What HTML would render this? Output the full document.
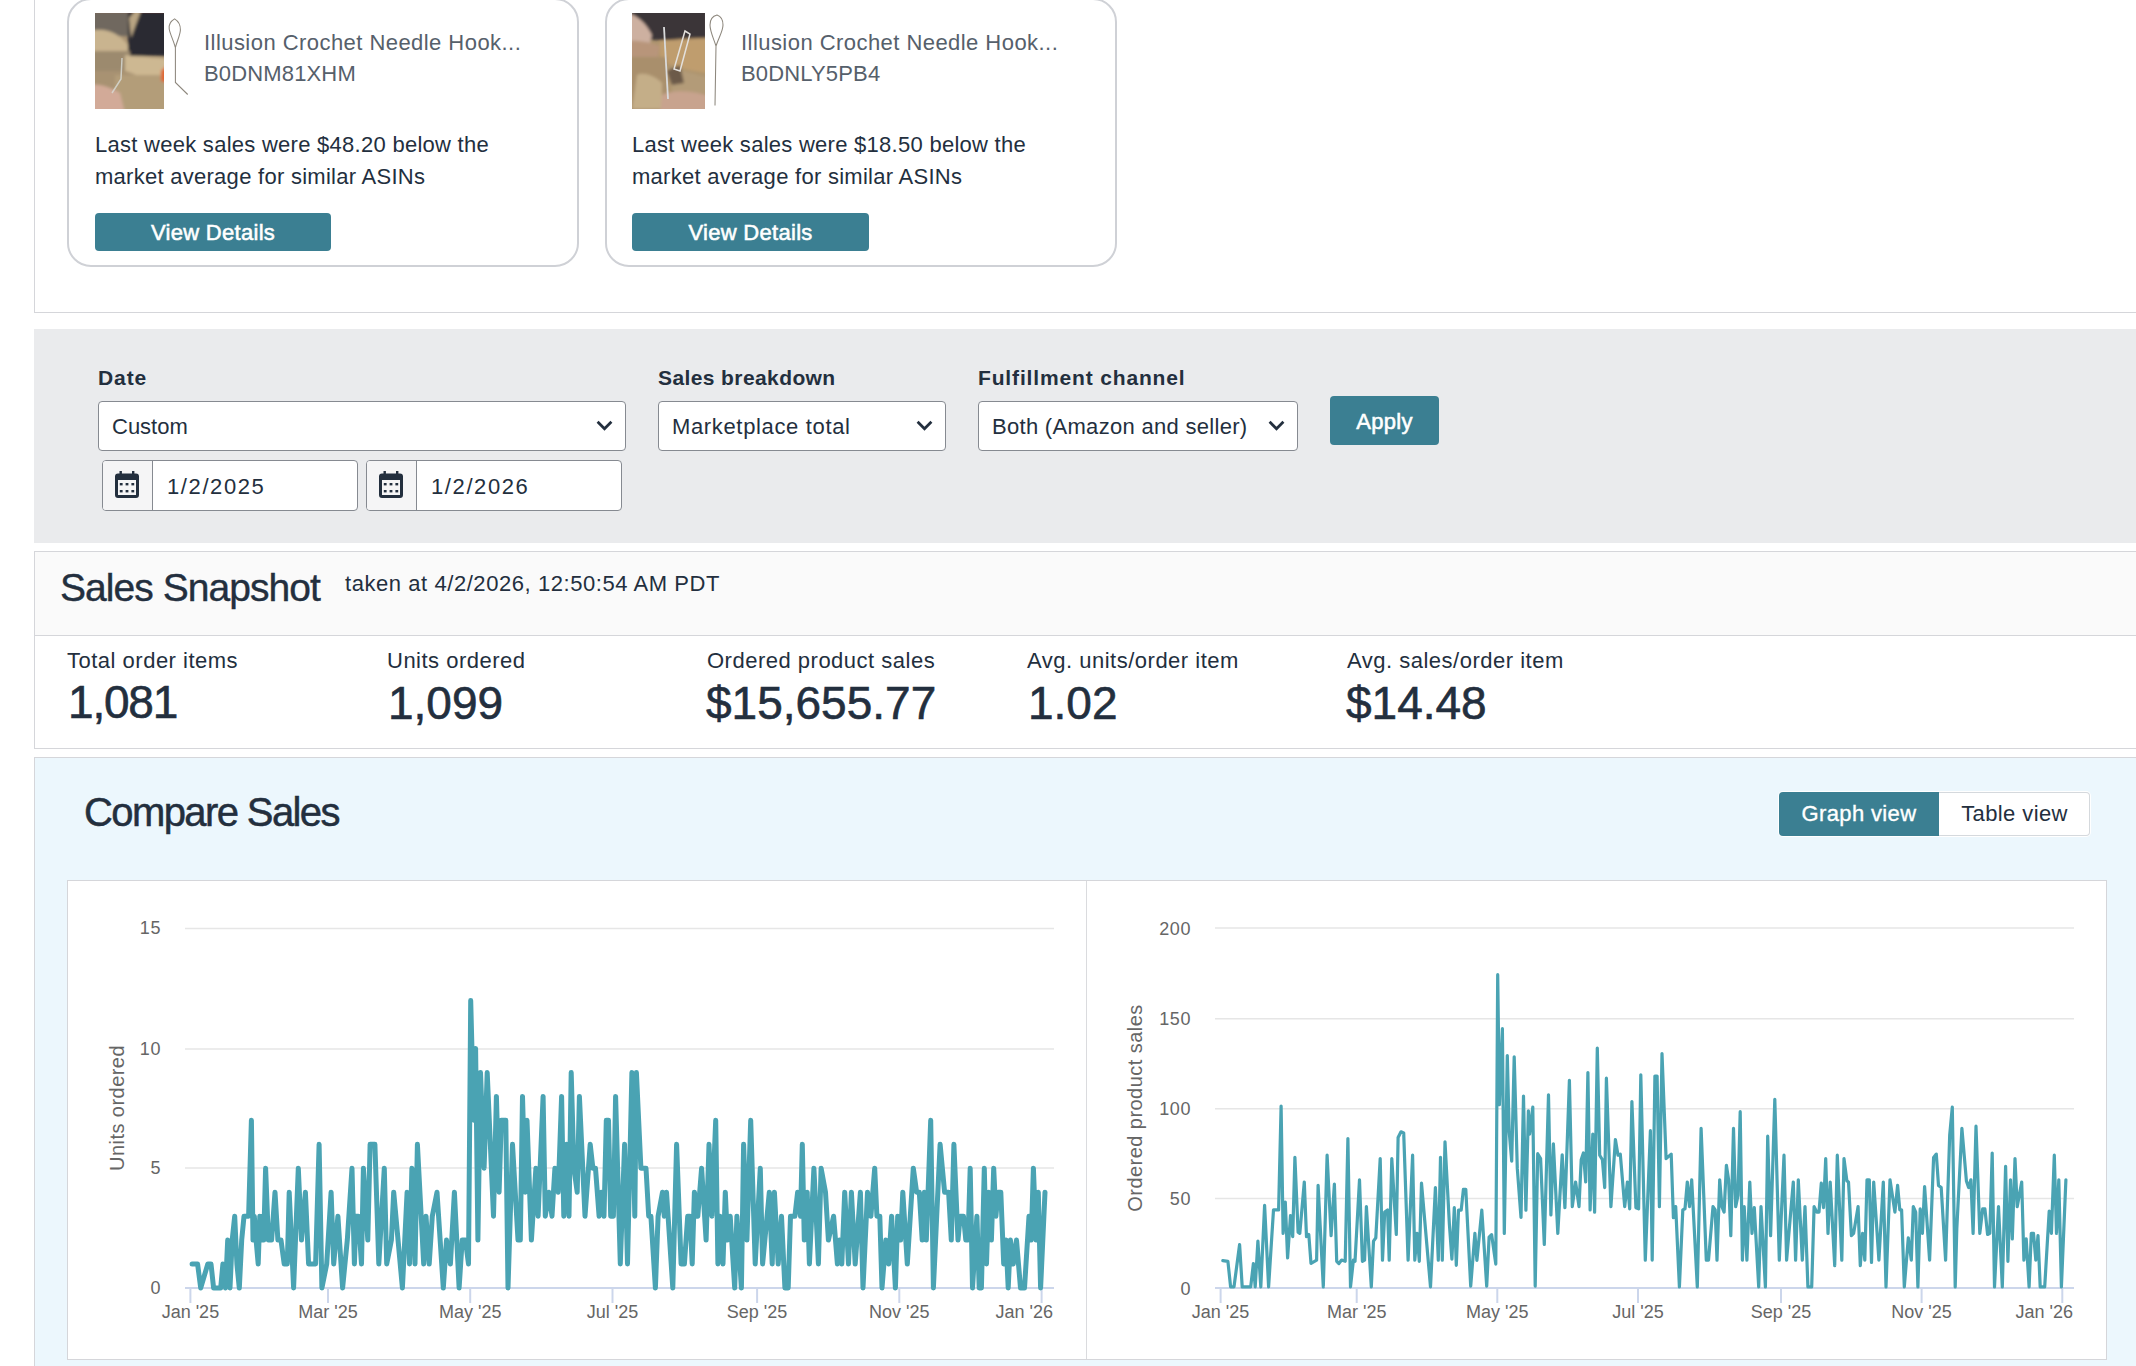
<!DOCTYPE html>
<html><head><meta charset="utf-8">
<style>
*{box-sizing:border-box;margin:0;padding:0}
html,body{width:2136px;height:1366px;overflow:hidden;background:#fff;font-family:"Liberation Sans",sans-serif;color:#232f3e}
.abs{position:absolute}
.panel{position:absolute;left:34px;top:-20px;width:2110px;height:333px;border-left:1px solid #d5d6da;border-bottom:1px solid #d5d6da;background:#fff}
.card{position:absolute;top:-2px;width:512px;height:269px;border:2px solid #cfd1d6;border-radius:24px;background:#fff}
.pimg1{background:linear-gradient(160deg,#6b6258 0%,#3a3530 30%,#b9a37f 45%,#8c7a60 70%,#c4ad8a 100%)}
.pimg2{background:linear-gradient(170deg,#3a3330 0%,#6d6055 18%,#b59f7c 35%,#a08a68 65%,#c7b291 100%)}
.ptitle{position:absolute;font-size:22px;color:#56606b;white-space:nowrap;letter-spacing:0.45px}
.ptext{position:absolute;font-size:22px;line-height:32px;color:#232f3e;white-space:nowrap;letter-spacing:0.27px}
.btn{position:absolute;background:#3b7f92;color:#fff;border-radius:4px;font-size:22px;font-weight:normal;-webkit-text-stroke:0.55px #fff;letter-spacing:0.3px;text-align:center;padding-top:1px}
.filters{position:absolute;left:34px;top:329px;width:2110px;height:214px;background:#eaebed}
.lbl{position:absolute;font-size:21px;font-weight:bold;color:#232f3e;white-space:nowrap;letter-spacing:0.5px}
.sel{position:absolute;height:50px;background:#fff;border:1.5px solid #868a91;border-radius:4px}
.sel span{position:absolute;left:13px;top:12px;font-size:22px;color:#232f3e;white-space:nowrap}
.chev{position:absolute;top:15px;width:17px;height:17px}
.din{position:absolute;height:51px;width:256px;background:#fff;border:1.5px solid #868a91;border-radius:4px;overflow:hidden}
.din .ic{position:absolute;left:0;top:0;width:50px;height:100%;background:#f5f5f6;border-right:1.5px solid #868a91}
.din span{position:absolute;left:64px;top:13px;font-size:22px;white-space:nowrap;letter-spacing:1.6px}
.snap{position:absolute;left:34px;top:551px;width:2110px;height:198px;border:1px solid #d5d6da;border-right:none;background:#fff}
.snaphead{position:absolute;left:0;top:0;width:100%;height:84px;background:#fafafa;border-bottom:1px solid #d5d6da}
.mlabel{position:absolute;font-size:22px;color:#232f3e;white-space:nowrap;letter-spacing:0.5px}
.mval{position:absolute;font-size:46px;color:#232f3e;white-space:nowrap;-webkit-text-stroke:0.6px #232f3e}
.compare{position:absolute;left:34px;top:757px;width:2110px;height:640px;background:#ecf7fd;border:1px solid #d5d6da;border-right:none}
.chartbox{position:absolute;left:67px;top:880px;width:2040px;height:480px;background:#fff;border:1.5px solid #d5d6da}
.axl{font-family:"Liberation Sans",sans-serif;font-size:18px;fill:#666666}
.ayl{font-family:"Liberation Sans",sans-serif;font-size:18px;fill:#666666;letter-spacing:0.6px}
.axt{font-family:"Liberation Sans",sans-serif;font-size:20px;fill:#666666;letter-spacing:0.45px}
</style></head><body>

<!-- top panel -->
<div class="panel"></div>

<div class="card" style="left:67px"></div>
<div class="card" style="left:605px"></div>

<!-- card 1 content -->
<svg class="abs" style="left:95px;top:13px" width="69" height="96" viewBox="0 0 69 96">
<defs><filter id="bl1" x="-10%" y="-10%" width="120%" height="120%"><feGaussianBlur stdDeviation="1.6"/></filter><clipPath id="cp1"><rect width="69" height="96"/></clipPath></defs>
<g clip-path="url(#cp1)"><rect width="69" height="96" fill="#a89272"/>
<g filter="url(#bl1)">
<rect x="-5" y="-5" width="40" height="28" fill="#6f685f"/>
<rect x="33" y="-5" width="40" height="48" fill="#2c2b31"/>
<path d="M34 5 L40 -2 L46 -2 L36 25 Z" fill="#b9a583"/>
<path d="M-5 18 C10 14 24 20 33 32 L33 44 C20 40 8 40 -5 38 Z" fill="#c9b48f"/>
<rect x="-5" y="38" width="40" height="20" fill="#9c8a6e"/>
<path d="M30 42 C45 44 60 44 72 46 L72 70 C55 68 42 62 30 58 Z" fill="#cdb892"/>
<rect x="20" y="62" width="55" height="40" fill="#b39d79"/>
<path d="M-5 72 C5 70 15 74 25 80 L30 100 L-5 100 Z" fill="#d2aa98"/>
<path d="M66 58 L72 52 L72 70 L66 68 Z" fill="#e0652e"/>
<rect x="-5" y="-5" width="75" height="3" fill="#c85a40"/>
</g>
<path d="M27 45 L26 66 L17 80" stroke="#d8dcd8" stroke-width="1.5" fill="none" opacity="0.8"/>
</g></svg>
<svg class="abs" style="left:165px;top:15px" width="28" height="85" viewBox="0 0 28 85"><path d="M9.6 3.9 C6 6 3.5 9 4.2 14 C5 19 8 24 10.4 32.6 C12 26 15 21 15.4 15 C15.6 9 13 6 9.6 3.9 Z M10.4 32.6 L10.4 67.5 L22.7 79.5" fill="none" stroke="#8d877d" stroke-width="1.05"/></svg>
<div class="ptitle" style="left:204px;top:30px">Illusion Crochet Needle Hook...</div>
<div class="ptitle" style="left:204px;top:61px;letter-spacing:0.15px">B0DNM81XHM</div>
<div class="ptext" style="left:95px;top:129px">Last week sales were $48.20 below the<br>market average for similar ASINs</div>
<div class="btn" style="left:95px;top:213px;width:236px;height:38px;line-height:38px">View Details</div>

<!-- card 2 content -->
<svg class="abs" style="left:632px;top:13px" width="73" height="96" viewBox="0 0 73 96">
<defs><filter id="bl2" x="-10%" y="-10%" width="120%" height="120%"><feGaussianBlur stdDeviation="1.6"/></filter><clipPath id="cp2"><rect width="73" height="96"/></clipPath></defs>
<g clip-path="url(#cp2)"><rect width="73" height="96" fill="#ad946e"/>
<g filter="url(#bl2)">
<rect x="-5" y="-5" width="80" height="32" fill="#3b3538"/>
<path d="M-5 0 C5 2 14 10 20 22 L18 30 L-5 30 Z" fill="#cdb0a0"/>
<path d="M-5 28 C8 27 20 30 28 33 L26 45 C15 45 5 44 -5 44 Z" fill="#b8957a"/>
<path d="M28 28 C45 26 60 25 75 25 L75 60 C55 58 40 52 28 48 Z" fill="#bf9d6e"/>
<rect x="-5" y="44" width="40" height="56" fill="#a98f6c"/>
<path d="M5 62 C12 58 25 64 30 70 L30 96 L0 96 Z" fill="#c4ae88"/>
<path d="M40 55 C55 58 65 62 75 64 L75 80 L40 80 Z" fill="#b39b78"/>
<path d="M35 58 L48 52 L52 70 L40 72 Z" fill="#6c5a48"/>
<path d="M30 82 C42 76 58 78 75 82 L75 100 L28 100 Z" fill="#c8a38e"/>
</g>
<path d="M32 14 L36 86" stroke="#d9dadb" stroke-width="1.8" fill="none"/>
<path d="M53 18 L58 21 L48 58 L42 56 Z" fill="none" stroke="#e3e0dc" stroke-width="1.5"/>
</g></svg>
<svg class="abs" style="left:705px;top:13px" width="24" height="95" viewBox="0 0 24 95"><path d="M12 2 C8 3 5 6 5 12 C5 18 8 24 11 33 C14 24 18 18 18 12 C18 6 15 3 12 2 Z M11 33 L10 92.5" fill="none" stroke="#8d877d" stroke-width="1.05"/></svg>
<div class="ptitle" style="left:741px;top:30px">Illusion Crochet Needle Hook...</div>
<div class="ptitle" style="left:741px;top:61px;letter-spacing:0.15px">B0DNLY5PB4</div>
<div class="ptext" style="left:632px;top:129px">Last week sales were $18.50 below the<br>market average for similar ASINs</div>
<div class="btn" style="left:632px;top:213px;width:237px;height:38px;line-height:38px">View Details</div>

<!-- filters -->
<div class="filters"></div>
<div class="lbl" style="left:98px;top:366px;letter-spacing:0.9px">Date</div>
<div class="lbl" style="left:658px;top:366px;letter-spacing:0.4px">Sales breakdown</div>
<div class="lbl" style="left:978px;top:366px;letter-spacing:0.85px">Fulfillment channel</div>

<div class="sel" style="left:98px;top:401px;width:528px"><span>Custom</span><svg class="chev" style="right:12px" viewBox="0 0 16 16"><path d="M1.5 4.5 L8 11 L14.5 4.5" fill="none" stroke="#232f3e" stroke-width="2.6"/></svg></div>
<div class="sel" style="left:658px;top:401px;width:288px"><span style="letter-spacing:0.65px">Marketplace total</span><svg class="chev" style="right:12px" viewBox="0 0 16 16"><path d="M1.5 4.5 L8 11 L14.5 4.5" fill="none" stroke="#232f3e" stroke-width="2.6"/></svg></div>
<div class="sel" style="left:978px;top:401px;width:320px"><span style="letter-spacing:0.3px">Both (Amazon and seller)</span><svg class="chev" style="right:12px" viewBox="0 0 16 16"><path d="M1.5 4.5 L8 11 L14.5 4.5" fill="none" stroke="#232f3e" stroke-width="2.6"/></svg></div>
<div class="btn" style="left:1330px;top:396px;width:109px;height:49px;line-height:49px">Apply</div>

<div class="din" style="left:102px;top:460px"><div class="ic"><svg class="abs" style="left:12px;top:10px" width="24" height="27" viewBox="0 0 24 27"><rect x="4.5" y="0" width="2.4" height="4" fill="#232f3e"/><rect x="17" y="0" width="2.4" height="4" fill="#232f3e"/><path d="M3 2.5 H21 A3 3 0 0 1 24 5.5 V24 A3 3 0 0 1 21 27 H3 A3 3 0 0 1 0 24 V5.5 A3 3 0 0 1 3 2.5 Z M3 9 V24 H21 V9 Z" fill="#232f3e" fill-rule="evenodd"/><g fill="#232f3e"><rect x="4.8" y="12" width="2.8" height="2.4"/><rect x="10.6" y="12" width="2.8" height="2.4"/><rect x="16.4" y="12" width="2.8" height="2.4"/><rect x="4.8" y="19" width="2.8" height="2.4"/><rect x="10.6" y="19" width="2.8" height="2.4"/><rect x="16.4" y="19" width="2.8" height="2.4"/></g></svg></div><span>1/2/2025</span></div>
<div class="din" style="left:366px;top:460px"><div class="ic"><svg class="abs" style="left:12px;top:10px" width="24" height="27" viewBox="0 0 24 27"><rect x="4.5" y="0" width="2.4" height="4" fill="#232f3e"/><rect x="17" y="0" width="2.4" height="4" fill="#232f3e"/><path d="M3 2.5 H21 A3 3 0 0 1 24 5.5 V24 A3 3 0 0 1 21 27 H3 A3 3 0 0 1 0 24 V5.5 A3 3 0 0 1 3 2.5 Z M3 9 V24 H21 V9 Z" fill="#232f3e" fill-rule="evenodd"/><g fill="#232f3e"><rect x="4.8" y="12" width="2.8" height="2.4"/><rect x="10.6" y="12" width="2.8" height="2.4"/><rect x="16.4" y="12" width="2.8" height="2.4"/><rect x="4.8" y="19" width="2.8" height="2.4"/><rect x="10.6" y="19" width="2.8" height="2.4"/><rect x="16.4" y="19" width="2.8" height="2.4"/></g></svg></div><span>1/2/2026</span></div>

<!-- snapshot -->
<div class="snap"><div class="snaphead"></div></div>
<div class="abs" style="left:60px;top:566px;font-size:39px;white-space:nowrap;letter-spacing:-0.95px;-webkit-text-stroke:0.4px #232f3e">Sales Snapshot</div>
<div class="abs" style="left:345px;top:571px;font-size:22px;white-space:nowrap;letter-spacing:0.56px">taken at 4/2/2026, 12:50:54 AM PDT</div>

<div class="mlabel" style="left:67px;top:648px">Total order items</div>
<div class="mval" style="left:68px;top:675px;letter-spacing:-1.2px">1,081</div>
<div class="mlabel" style="left:387px;top:648px">Units ordered</div>
<div class="mval" style="left:388px;top:676px">1,099</div>
<div class="mlabel" style="left:707px;top:648px">Ordered product sales</div>
<div class="mval" style="left:706px;top:676px">$15,655.77</div>
<div class="mlabel" style="left:1027px;top:648px">Avg. units/order item</div>
<div class="mval" style="left:1028px;top:676px">1.02</div>
<div class="mlabel" style="left:1347px;top:648px">Avg. sales/order item</div>
<div class="mval" style="left:1346px;top:676px">$14.48</div>

<!-- compare -->
<div class="compare"></div>
<div class="abs" style="left:84px;top:790px;font-size:40px;white-space:nowrap;letter-spacing:-1.6px;-webkit-text-stroke:0.5px #232f3e">Compare Sales</div>
<div class="abs" style="left:1778px;top:791px;width:313px;height:46px;border-radius:5px;background:#fff"></div>
<div class="abs" style="left:1938px;top:792px;width:152px;height:44px;border:1.5px solid #d5d9dd;border-left:none;border-radius:0 4px 4px 0;background:#fff"></div>
<div class="abs" style="left:1779px;top:792px;width:160px;height:44px;border-radius:4px 0 0 4px;background:#3b7f92;color:#fff;font-size:22px;line-height:44px;text-align:center;letter-spacing:0.35px;-webkit-text-stroke:0.35px #fff">Graph view</div>
<div class="abs" style="left:1939px;top:792px;width:151px;height:44px;color:#232f3e;font-size:22px;line-height:44px;text-align:center;letter-spacing:0.4px">Table view</div>
<div class="chartbox"></div>
<div class="abs" style="left:1086px;top:881px;width:1px;height:478px;background:#dadbde"></div>
<svg class="abs" style="left:0;top:0" width="2136" height="1366" viewBox="0 0 2136 1366">
<line x1="185" y1="928.5" x2="1054" y2="928.5" stroke="#e6e6e6" stroke-width="1.5"/>
<line x1="185" y1="1049" x2="1054" y2="1049" stroke="#e6e6e6" stroke-width="1.5"/>
<line x1="185" y1="1168" x2="1054" y2="1168" stroke="#e6e6e6" stroke-width="1.5"/>
<line x1="185" y1="1288" x2="1054" y2="1288" stroke="#ccd6eb" stroke-width="2"/>
<line x1="190.4" y1="1288" x2="190.4" y2="1303" stroke="#ccd6eb" stroke-width="2"/>
<line x1="328.0" y1="1288" x2="328.0" y2="1303" stroke="#ccd6eb" stroke-width="2"/>
<line x1="470.2" y1="1288" x2="470.2" y2="1303" stroke="#ccd6eb" stroke-width="2"/>
<line x1="612.5" y1="1288" x2="612.5" y2="1303" stroke="#ccd6eb" stroke-width="2"/>
<line x1="757.1" y1="1288" x2="757.1" y2="1303" stroke="#ccd6eb" stroke-width="2"/>
<line x1="899.3" y1="1288" x2="899.3" y2="1303" stroke="#ccd6eb" stroke-width="2"/>
<line x1="1041.6" y1="1288" x2="1041.6" y2="1303" stroke="#ccd6eb" stroke-width="2"/>
<text x="190.4" y="1318" text-anchor="middle" class="axl">Jan '25</text>
<text x="328.0" y="1318" text-anchor="middle" class="axl">Mar '25</text>
<text x="470.2" y="1318" text-anchor="middle" class="axl">May '25</text>
<text x="612.5" y="1318" text-anchor="middle" class="axl">Jul '25</text>
<text x="757.1" y="1318" text-anchor="middle" class="axl">Sep '25</text>
<text x="899.3" y="1318" text-anchor="middle" class="axl">Nov '25</text>
<text x="1053" y="1318" text-anchor="end" class="axl">Jan '26</text>
<text x="161" y="934.2" text-anchor="end" class="ayl">15</text>
<text x="161" y="1054.7" text-anchor="end" class="ayl">10</text>
<text x="161" y="1173.7" text-anchor="end" class="ayl">5</text>
<text x="161" y="1293.7" text-anchor="end" class="ayl">0</text>
<text transform="translate(123.5 1108) rotate(-90)" text-anchor="middle" class="axt">Units ordered</text>
<path d="M192.1 1264.0 L197.6 1264.0 L200.7 1288.0 L207.8 1264.0 L211.0 1264.0 L213.6 1288.0 L218.4 1288.0 L220.7 1288.0 L222.9 1264.0 L225.5 1288.0 L227.7 1240.1 L230.0 1288.0 L232.2 1240.1 L234.7 1216.2 L236.9 1264.0 L239.3 1288.0 L241.7 1240.1 L244.0 1216.2 L246.2 1216.2 L248.6 1216.2 L251.4 1120.3 L253.0 1240.1 L254.3 1216.2 L256.1 1240.1 L258.2 1264.0 L259.8 1216.2 L261.3 1240.1 L262.4 1216.2 L263.7 1240.1 L265.6 1168.2 L268.4 1240.1 L271.6 1240.1 L275.0 1192.2 L277.9 1240.1 L281.0 1240.1 L284.2 1264.0 L287.3 1264.0 L289.2 1192.2 L293.6 1288.0 L298.3 1168.2 L301.5 1240.1 L305.4 1192.2 L308.6 1264.0 L315.6 1264.0 L319.1 1144.3 L321.9 1288.0 L326.7 1264.0 L331.1 1192.2 L333.7 1264.0 L337.9 1216.2 L342.6 1288.0 L347.3 1240.1 L352.0 1168.2 L354.4 1264.0 L356.0 1216.2 L358.3 1216.2 L361.5 1264.0 L363.4 1168.2 L367.8 1240.1 L370.1 1144.3 L374.9 1144.3 L378.8 1264.0 L384.3 1168.2 L386.7 1264.0 L391.4 1240.1 L393.7 1192.2 L402.4 1288.0 L407.1 1192.2 L409.5 1264.0 L411.9 1168.2 L415.0 1264.0 L417.4 1144.3 L423.7 1264.0 L426.0 1216.2 L429.2 1264.0 L432.3 1216.2 L437.0 1192.2 L443.3 1288.0 L446.5 1240.1 L450.4 1264.0 L454.4 1192.2 L459.1 1288.0 L462.2 1240.1 L465.4 1240.1 L468.5 1264.0 L470.7 1000.6 L473.8 1120.3 L475.6 1048.5 L477.9 1240.1 L480.5 1072.5 L484.1 1168.2 L487.2 1072.5 L493.5 1216.2 L496.4 1096.4 L499.1 1192.2 L501.3 1120.3 L505.8 1120.3 L508.0 1288.0 L512.5 1144.3 L518.0 1240.1 L520.3 1240.1 L522.5 1096.4 L525.2 1192.2 L527.0 1120.3 L531.4 1240.1 L535.9 1168.2 L538.1 1216.2 L543.1 1096.4 L545.3 1216.2 L548.9 1192.2 L552.0 1216.2 L554.9 1168.2 L558.2 1192.2 L561.6 1096.4 L563.8 1216.2 L566.7 1144.3 L569.0 1216.2 L571.2 1072.5 L573.9 1168.2 L577.2 1192.2 L579.4 1096.4 L585.0 1216.2 L590.2 1144.3 L592.9 1168.2 L595.5 1168.2 L599.1 1216.2 L601.3 1192.2 L604.0 1216.2 L606.3 1120.3 L608.5 1120.3 L610.7 1216.2 L613.4 1216.2 L615.6 1096.4 L620.3 1264.0 L624.6 1144.3 L627.5 1264.0 L631.9 1072.5 L634.8 1216.2 L636.4 1072.5 L640.9 1168.2 L646.0 1168.2 L648.7 1216.2 L650.9 1216.2 L655.4 1288.0 L658.1 1216.2 L662.5 1192.2 L664.3 1216.2 L666.5 1192.2 L672.8 1288.0 L676.6 1144.3 L681.1 1264.0 L684.4 1264.0 L687.7 1216.2 L690.0 1216.2 L692.2 1264.0 L694.4 1192.2 L697.8 1216.2 L701.6 1168.2 L706.1 1240.1 L709.0 1144.3 L711.9 1216.2 L715.7 1120.3 L717.9 1264.0 L720.1 1216.2 L723.0 1264.0 L725.3 1192.2 L727.5 1240.1 L730.2 1216.2 L734.7 1288.0 L736.9 1216.2 L741.4 1288.0 L743.6 1144.3 L746.9 1240.1 L750.7 1120.3 L755.2 1264.0 L760.3 1168.2 L762.6 1264.0 L769.3 1192.2 L772.2 1264.0 L774.4 1192.2 L778.2 1264.0 L781.5 1216.2 L784.9 1288.0 L788.2 1288.0 L790.5 1216.2 L794.9 1216.2 L797.6 1192.2 L800.5 1216.2 L802.3 1144.3 L804.3 1240.1 L807.2 1192.2 L809.4 1264.0 L813.9 1168.2 L818.4 1264.0 L821.1 1168.2 L825.5 1192.2 L828.4 1240.1 L833.6 1216.2 L837.4 1264.0 L839.6 1240.1 L841.8 1264.0 L844.7 1192.2 L848.5 1264.0 L851.4 1192.2 L855.2 1264.0 L860.4 1192.2 L863.0 1288.0 L867.5 1192.2 L870.9 1216.2 L874.7 1168.2 L876.9 1216.2 L879.8 1216.2 L882.0 1288.0 L885.8 1240.1 L888.7 1264.0 L891.6 1216.2 L895.4 1288.0 L897.7 1216.2 L900.6 1240.1 L902.8 1192.2 L907.3 1264.0 L913.3 1168.2 L916.6 1192.2 L919.3 1192.2 L922.2 1240.1 L924.4 1192.2 L926.3 1240.1 L930.7 1120.3 L933.4 1288.0 L936.7 1216.2 L940.1 1144.3 L944.6 1192.2 L948.6 1192.2 L951.3 1240.1 L953.9 1144.3 L958.0 1240.1 L960.2 1216.2 L963.5 1216.2 L965.8 1240.1 L968.0 1240.1 L970.2 1168.2 L972.5 1288.0 L976.9 1216.2 L979.2 1288.0 L981.4 1288.0 L984.3 1168.2 L986.5 1264.0 L988.8 1192.2 L991.4 1240.1 L993.7 1168.2 L995.9 1216.2 L998.1 1192.2 L1000.8 1192.2 L1003.7 1264.0 L1006.0 1240.1 L1008.2 1288.0 L1010.4 1240.1 L1013.3 1264.0 L1016.5 1240.1 L1020.5 1288.0 L1024.5 1288.0 L1029.0 1216.2 L1031.2 1240.1 L1033.4 1168.2 L1036.1 1240.1 L1038.3 1192.2 L1040.6 1288.0 L1045.0 1192.2" fill="none" stroke="#4aa3b3" stroke-width="5" stroke-linejoin="round" stroke-linecap="round"/>
<line x1="1215" y1="928" x2="2074" y2="928" stroke="#e6e6e6" stroke-width="1.5"/>
<line x1="1215" y1="1018.8" x2="2074" y2="1018.8" stroke="#e6e6e6" stroke-width="1.5"/>
<line x1="1215" y1="1108.7" x2="2074" y2="1108.7" stroke="#e6e6e6" stroke-width="1.5"/>
<line x1="1215" y1="1198.5" x2="2074" y2="1198.5" stroke="#e6e6e6" stroke-width="1.5"/>
<line x1="1215" y1="1288" x2="2074" y2="1288" stroke="#ccd6eb" stroke-width="2"/>
<line x1="1220.6" y1="1288" x2="1220.6" y2="1303" stroke="#ccd6eb" stroke-width="2"/>
<line x1="1356.7" y1="1288" x2="1356.7" y2="1303" stroke="#ccd6eb" stroke-width="2"/>
<line x1="1497.3" y1="1288" x2="1497.3" y2="1303" stroke="#ccd6eb" stroke-width="2"/>
<line x1="1638.0" y1="1288" x2="1638.0" y2="1303" stroke="#ccd6eb" stroke-width="2"/>
<line x1="1781.0" y1="1288" x2="1781.0" y2="1303" stroke="#ccd6eb" stroke-width="2"/>
<line x1="1921.6" y1="1288" x2="1921.6" y2="1303" stroke="#ccd6eb" stroke-width="2"/>
<line x1="2062.3" y1="1288" x2="2062.3" y2="1303" stroke="#ccd6eb" stroke-width="2"/>
<text x="1220.6" y="1318" text-anchor="middle" class="axl">Jan '25</text>
<text x="1356.7" y="1318" text-anchor="middle" class="axl">Mar '25</text>
<text x="1497.3" y="1318" text-anchor="middle" class="axl">May '25</text>
<text x="1638.0" y="1318" text-anchor="middle" class="axl">Jul '25</text>
<text x="1781.0" y="1318" text-anchor="middle" class="axl">Sep '25</text>
<text x="1921.6" y="1318" text-anchor="middle" class="axl">Nov '25</text>
<text x="2073" y="1318" text-anchor="end" class="axl">Jan '26</text>
<text x="1191" y="934.5" text-anchor="end" class="ayl">200</text>
<text x="1191" y="1025.3" text-anchor="end" class="ayl">150</text>
<text x="1191" y="1115.2" text-anchor="end" class="ayl">100</text>
<text x="1191" y="1205.0" text-anchor="end" class="ayl">50</text>
<text x="1191" y="1294.5" text-anchor="end" class="ayl">0</text>
<text transform="translate(1142 1108) rotate(-90)" text-anchor="middle" class="axt">Ordered product sales</text>
<path d="M1222.8 1260.6 L1227.9 1261.3 L1230.6 1286.9 L1234.0 1286.9 L1239.6 1244.5 L1242.2 1286.9 L1250.7 1286.9 L1253.4 1263.5 L1255.2 1286.9 L1257.9 1241.2 L1260.8 1286.9 L1264.6 1205.4 L1268.6 1286.9 L1273.5 1209.9 L1278.6 1209.9 L1281.1 1106.1 L1283.1 1233.4 L1285.3 1202.1 L1287.6 1257.9 L1290.5 1215.5 L1292.7 1236.7 L1294.9 1157.4 L1298.1 1232.2 L1299.8 1233.4 L1304.3 1182.0 L1306.5 1236.7 L1308.8 1234.5 L1311.0 1263.5 L1316.6 1260.1 L1318.1 1185.4 L1323.3 1286.9 L1327.1 1155.2 L1331.1 1235.6 L1334.4 1184.2 L1336.7 1261.3 L1338.9 1263.5 L1341.6 1260.1 L1345.2 1261.3 L1347.9 1138.5 L1350.5 1286.9 L1353.4 1260.1 L1355.0 1261.3 L1359.5 1179.8 L1362.4 1261.3 L1364.6 1260.1 L1366.4 1206.6 L1371.3 1286.9 L1373.5 1241.2 L1375.8 1237.8 L1380.2 1158.6 L1382.5 1260.1 L1384.7 1212.1 L1387.6 1209.9 L1389.2 1260.1 L1391.8 1158.6 L1396.3 1234.5 L1398.1 1137.4 L1401.0 1131.8 L1403.7 1132.9 L1408.1 1260.1 L1412.6 1155.2 L1414.8 1260.1 L1417.1 1233.4 L1419.3 1261.3 L1421.5 1183.1 L1430.5 1286.9 L1435.4 1187.6 L1438.3 1260.1 L1440.5 1157.4 L1442.3 1260.1 L1445.0 1141.8 L1449.4 1224.4 L1451.9 1259.2 L1454.3 1207.7 L1456.3 1265.3 L1458.5 1210.1 L1461.2 1210.1 L1463.4 1189.3 L1465.8 1189.3 L1470.7 1286.1 L1474.9 1233.4 L1476.9 1260.4 L1481.8 1210.1 L1486.7 1286.1 L1489.1 1237.1 L1491.6 1234.6 L1495.8 1264.1 L1497.7 974.7 L1499.4 1104.7 L1502.4 1028.7 L1504.3 1233.4 L1507.3 1055.6 L1509.2 1131.7 L1511.7 1161.1 L1514.2 1056.9 L1517.3 1168.4 L1521.0 1217.5 L1523.5 1096.1 L1525.9 1210.1 L1528.4 1110.8 L1529.6 1134.1 L1532.8 1107.1 L1535.2 1286.1 L1537.7 1153.7 L1540.6 1158.6 L1544.3 1244.5 L1548.5 1094.9 L1550.9 1215.0 L1553.4 1143.9 L1557.8 1233.4 L1562.2 1154.9 L1564.9 1207.7 L1569.4 1080.4 L1572.3 1206.6 L1575.6 1182.0 L1579.0 1206.6 L1581.2 1159.7 L1583.4 1153.0 L1585.7 1182.0 L1587.9 1072.6 L1590.1 1209.9 L1592.8 1134.0 L1594.6 1212.1 L1597.3 1048.0 L1599.7 1155.2 L1602.4 1159.7 L1604.7 1187.6 L1606.4 1078.2 L1610.9 1206.6 L1615.4 1139.6 L1618.0 1155.2 L1620.3 1154.1 L1624.7 1206.6 L1627.4 1182.0 L1629.7 1208.8 L1631.9 1101.6 L1635.9 1207.7 L1638.6 1208.8 L1640.8 1074.8 L1645.3 1260.1 L1650.4 1130.7 L1652.2 1260.1 L1654.9 1076.0 L1657.1 1076.0 L1659.4 1206.6 L1662.0 1053.6 L1666.1 1158.6 L1671.2 1154.1 L1673.4 1217.7 L1675.7 1206.6 L1679.4 1286.9 L1682.8 1209.9 L1685.0 1208.8 L1687.3 1182.0 L1689.5 1206.6 L1691.7 1179.8 L1697.3 1286.9 L1701.1 1128.4 L1706.3 1260.1 L1708.5 1260.1 L1713.0 1206.6 L1715.2 1209.9 L1717.0 1260.1 L1719.7 1179.8 L1721.9 1206.6 L1724.1 1212.1 L1726.4 1165.3 L1728.6 1179.8 L1730.8 1235.6 L1733.5 1128.4 L1735.7 1206.6 L1738.0 1195.4 L1740.2 1111.7 L1742.4 1260.1 L1744.2 1206.6 L1746.9 1260.1 L1749.8 1182.0 L1752.0 1233.4 L1754.3 1207.7 L1758.7 1286.9 L1761.0 1206.6 L1765.4 1286.9 L1767.7 1136.2 L1770.6 1235.6 L1774.8 1099.4 L1779.3 1260.1 L1784.0 1155.2 L1786.6 1260.1 L1793.3 1182.0 L1795.6 1260.1 L1798.3 1179.8 L1802.3 1260.1 L1805.0 1206.6 L1807.9 1286.9 L1811.7 1286.9 L1814.1 1206.6 L1816.8 1212.1 L1819.0 1212.1 L1821.3 1183.1 L1823.5 1207.7 L1825.7 1158.6 L1828.0 1233.4 L1830.2 1182.0 L1834.7 1265.7 L1837.3 1155.2 L1841.8 1260.1 L1844.0 1158.6 L1846.9 1180.9 L1848.5 1182.0 L1851.4 1235.6 L1853.6 1233.4 L1858.1 1206.6 L1860.3 1265.7 L1862.6 1233.4 L1864.8 1260.1 L1867.0 1179.8 L1869.3 1179.8 L1871.5 1262.4 L1873.7 1182.0 L1878.9 1260.1 L1883.3 1182.0 L1886.0 1286.9 L1890.0 1179.8 L1894.9 1212.1 L1897.6 1185.4 L1899.8 1209.9 L1901.6 1209.9 L1904.3 1286.9 L1908.3 1237.8 L1911.3 1260.1 L1913.3 1206.6 L1915.7 1212.1 L1917.9 1286.9 L1920.2 1208.8 L1922.4 1233.4 L1924.6 1186.5 L1929.6 1260.1 L1933.6 1157.4 L1936.3 1154.1 L1938.5 1185.4 L1941.2 1187.6 L1945.6 1260.1 L1949.7 1135.1 L1952.3 1107.2 L1955.2 1286.9 L1956.8 1228.9 L1961.9 1128.4 L1966.4 1180.9 L1968.6 1187.6 L1970.9 1179.8 L1973.1 1233.4 L1976.0 1126.2 L1979.8 1233.4 L1982.7 1208.8 L1984.9 1208.8 L1987.6 1234.5 L1989.8 1233.4 L1992.2 1153.0 L1994.5 1286.9 L1998.5 1206.6 L2002.3 1286.9 L2005.6 1166.4 L2007.9 1261.3 L2010.5 1179.8 L2012.3 1238.9 L2015.0 1158.6 L2017.2 1206.6 L2021.7 1182.0 L2023.9 1260.1 L2026.2 1238.9 L2029.1 1286.9 L2031.3 1233.4 L2033.5 1233.4 L2035.8 1260.1 L2038.0 1235.6 L2040.2 1286.9 L2044.7 1286.9 L2049.2 1211.0 L2051.4 1233.4 L2054.3 1155.2 L2056.5 1233.4 L2058.8 1179.8 L2061.4 1286.9 L2065.9 1179.8" fill="none" stroke="#4aa3b3" stroke-width="3.2" stroke-linejoin="round" stroke-linecap="round"/>
</svg>

</body></html>
